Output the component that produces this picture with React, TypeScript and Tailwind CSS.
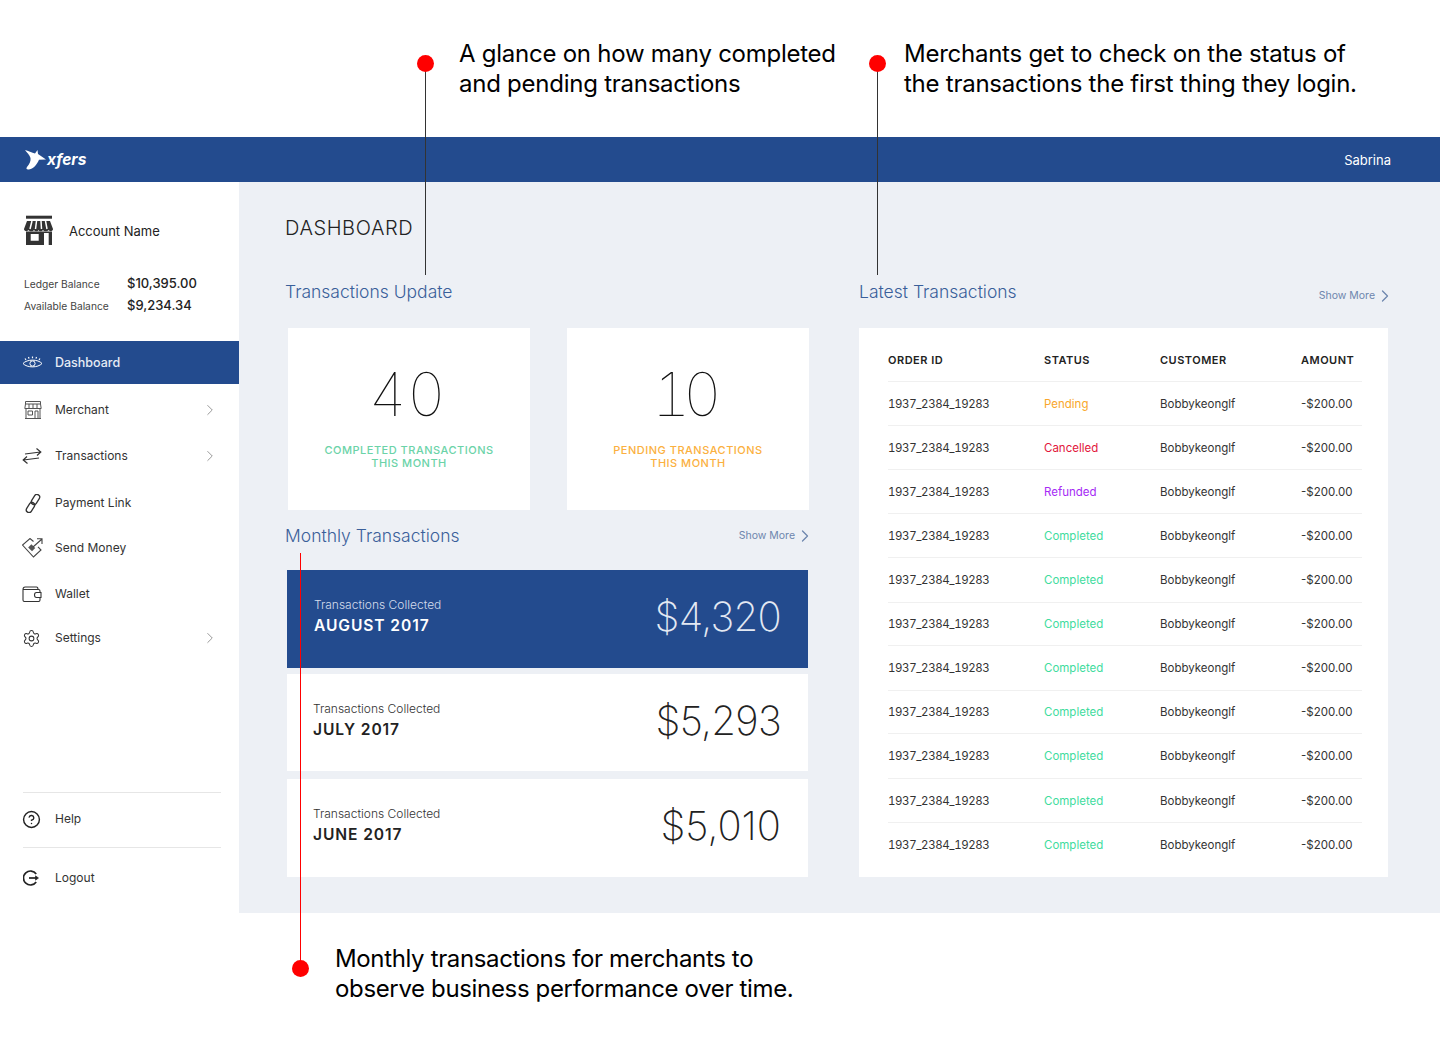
import { ChevronRight, Settings, CircleHelp } from 'lucide-react';

const GREEN = 'text-[#3fdc9e]';

const rows = [
  { status: 'Pending', color: 'text-[#f9a72b]', h: 'h-[44px]' },
  { status: 'Cancelled', color: 'text-[#e2163c]', h: 'h-[44px]' },
  { status: 'Refunded', color: 'text-[#a62bf5]', h: 'h-[44px]' },
  { status: 'Completed', color: GREEN, h: 'h-[44px]' },
  { status: 'Completed', color: GREEN, h: 'h-[45px]' },
  { status: 'Completed', color: GREEN, h: 'h-[43px]' },
  { status: 'Completed', color: GREEN, h: 'h-[45px]' },
  { status: 'Completed', color: GREEN, h: 'h-[43px]' },
  { status: 'Completed', color: GREEN, h: 'h-[45px]' },
  { status: 'Completed', color: GREEN, h: 'h-[44px]' },
  { status: 'Completed', color: GREEN, h: 'h-[44px]' },
];

const months = [
  { month: 'AUGUST 2017', amount: '$4,320', active: true, h: 'h-[98px]', tracking: 'tracking-[-0.7px]' },
  { month: 'JULY 2017', amount: '$5,293', active: false, h: 'h-[97px] pt-[1px]', tracking: 'tracking-[-0.7px]' },
  { month: 'JUNE 2017', amount: '$5,010', active: false, h: 'h-[98px] mt-[2px]', tracking: 'tracking-[0px]' },
];

function Logo() {
  return (
    <svg width="22" height="22" viewBox="0 0 22 22" className="shrink-0">
      <path d="M0 1 C3 2 7 3.5 10 4.5 L12.5 1 L13 5 L21 10.5 L14 10.8 C12 15.5 9 19.5 4 20.5 C1.5 21 .8 19.5 2 18 C4.5 15 6 12 5.5 9 C4.5 6 2 3.5 0 1 Z" fill="#fff" />
    </svg>
  );
}

function StoreSolid() {
  return (
    <svg width="30" height="31" viewBox="0 0 30 31" fill="#333">
      <rect x="2" y="0.7" width="26" height="3" />
      <path d="M3 6 H26 L29 14 C29 16.5 25.5 16.8 24.5 15 C23.5 16.8 20 16.8 19 15 C18 16.8 15 16.8 14.5 15 C14 16.8 11 16.8 10 15 C9 16.8 5.5 16.8 4.5 15 C3.5 16.8 0 16.5 0 14 Z" />
      <path d="M8 6 L6 14 M12.5 6 L11.5 14 M17 6 L17.5 14 M21.5 6 L23 14" stroke="#fff" strokeWidth="1.5" />
      <path fillRule="evenodd" d="M2 16.5 H28 V30 H2 Z M6.7 19 V25.7 H14.7 V19 Z M20 18 V30 H24.7 V18 Z" />
    </svg>
  );
}

function MerchantIcon() {
  return (
    <svg width="18" height="18" viewBox="0 0 18 18" fill="none" stroke="#555" strokeWidth="1">
      <path d="M1.5 .5 H16.5 V3 H1.5 Z M1.5 3 L.8 7.5 H17.2 L16.5 3 M5 3 V7.5 M9 3 V7.5 M13 3 V7.5 M2 7.5 V17.5 H16 V7.5 M4 10 H8.5 V14 H4 Z M11 17.5 V10 H14 V17.5 M1 17.5 H17" />
    </svg>
  );
}

function TransferIcon() {
  return (
    <svg width="20" height="16" viewBox="0 0 20 16" fill="none" stroke="#333" strokeWidth="1.2">
      <path d="M3 6 L18.5 4 M14.5 .5 L18.8 4 L15 7.5 M17 10 L1.5 12 M5 8.5 L1.2 12 L5.5 15.5" />
    </svg>
  );
}

function LinkIcon() {
  return (
    <svg width="16" height="19" viewBox="0 0 16 19" fill="none" stroke="#333" strokeWidth="1.3">
      <rect x="0" y="10.8" width="11" height="5.4" rx="2.7" transform="rotate(-58 5.5 13.5)" />
      <rect x="5" y="2.8" width="11" height="5.4" rx="2.7" transform="rotate(-58 10.5 5.5)" />
    </svg>
  );
}

function SendMoneyIcon() {
  return (
    <svg width="21" height="20" viewBox="0 0 21 20" fill="none" stroke="#444" strokeWidth="1.1">
      <path d="M11.5 3.5 L8 .5 L.5 7 L11.5 19 L19 12 L16 8.8" />
      <rect x="7" y="7.5" width="5.5" height="4.5" fill="#555" stroke="none" transform="rotate(45 9.7 9.7)" />
      <path d="M11 9 L20 1 M15 .8 H20 V6" />
    </svg>
  );
}

function WalletIcon() {
  return (
    <svg width="20" height="16" viewBox="0 0 20 16" fill="none" stroke="#333" strokeWidth="1.1">
      <path d="M1 3.5 H16.5 C17.5 3.5 18 4 18 5 V6.5 M18 11.5 V14 C18 14.8 17.5 15.5 16.5 15.5 H2.5 C1.5 15.5 1 14.8 1 14 V3.5 C1 2 2 1 3.2 1 H14.5 C15.5 1 16 1.6 16 3.5" />
      <path d="M19 6.5 H14.5 C13 6.5 12.5 7.5 12.5 9 C12.5 10.5 13 11.5 14.5 11.5 H19 Z" />
    </svg>
  );
}

function EyeIcon() {
  return (
    <svg width="21" height="13" viewBox="0 0 21 13" fill="none" stroke="#fff" strokeWidth="1">
      <path d="M1 7.5 C5 3 16 3 20 7.5 C16 12 5 12 1 7.5 Z" />
      <circle cx="10.5" cy="7.5" r="2.6" />
      <path d="M10.5 .5 V2.2 M6.5 1 L7 2.6 M14.5 1 L14 2.6 M3 2.5 L4 3.8 M18 2.5 L17 3.8" strokeWidth="1.2" />
    </svg>
  );
}

function LogoutIcon() {
  return (
    <svg width="17" height="16" viewBox="0 0 17 16" fill="none" stroke="#222" strokeWidth="1.7">
      <path d="M13.2 4 A7 7 0 1 0 13.2 12" />
      <path d="M6 8 H14" />
      <path d="M12.5 5.8 L15.5 8 L12.5 10.2 Z" fill="#222" strokeWidth="0.6" />
    </svg>
  );
}

const navItems = [
  { label: 'Merchant', icon: <MerchantIcon />, chevron: true, h: 'h-[46px]', indent: 'pl-[24px]' },
  { label: 'Transactions', icon: <TransferIcon />, chevron: true, h: 'h-[46px]', indent: 'pl-[22px]' },
  { label: 'Payment Link', icon: <LinkIcon />, chevron: false, h: 'h-[46px] pt-[2px]', indent: 'pl-[25px]' },
  { label: 'Send Money', icon: <SendMoneyIcon />, chevron: false, h: 'h-[46px]', indent: 'pl-[22px]' },
  { label: 'Wallet', icon: <WalletIcon />, chevron: false, h: 'h-[46px]', indent: 'pl-[22px]' },
  { label: 'Settings', icon: <Settings size={19} strokeWidth={1.3} color="#333" />, chevron: true, h: 'h-[42px]', indent: 'pl-[22px]' },
];

function SectionTitle({ title }: { title: string }) {
  return <h2 className="text-[17.5px] leading-[24px] font-light text-[#3a5f9a]">{title}</h2>;
}

function ShowMore() {
  return (
    <div className="flex items-center -mr-[7px] text-[10.5px] text-[#6d86ad]">
      <span>Show More</span>
      <ChevronRight size={20} strokeWidth={1.5} />
    </div>
  );
}

function StatCard({ value, color }: { value: string; color: string }) {
  return (
    <div className="w-[242px] h-[182px] bg-white flex flex-col items-center pt-[31px]">
      <div className={`text-[60px] leading-[70px] font-thin tabular-nums text-[#111] ${value === '40' ? 'pr-[4px]' : 'pr-[10px] tracking-[-8px]'}`}>{value}</div>
      <div className={`mt-[15px] text-center text-[11px] leading-[13px] font-medium tracking-[0.5px] ${color}`}>
        {value === '40' ? 'COMPLETED TRANSACTIONS' : 'PENDING TRANSACTIONS'}
        <br />
        THIS MONTH
      </div>
    </div>
  );
}

export default function App() {
  return (
    <div className="relative w-[1440px] h-[1044px] overflow-hidden bg-white font-['Inter',sans-serif] text-[#222]">
      {/* Top notes */}
      <div className="h-[137px] pt-[39px] pl-[459px] flex text-[24px] leading-[30px] tracking-[-0.25px] text-black">
        <p className="w-[445px]">A glance on how many completed<br />and pending transactions</p>
        <p>Merchants get to check on the status of<br />the transactions the first thing they login.</p>
      </div>

      {/* Header */}
      <header className="h-[45px] bg-[#234b8e] flex items-center justify-between pl-[25px] pr-[49px] pt-[1px] text-white">
        <div className="flex items-center">
          <Logo />
          <span className="text-[15.5px] font-bold italic">xfers</span>
        </div>
        <span className="text-[13px] pt-[1px]">Sabrina</span>
      </header>

      <div className="h-[731px] flex">
        {/* Sidebar */}
        <aside className="w-[239px] bg-white flex flex-col">
          <div className="flex items-center pl-[24px] pt-[33px] gap-[15px]">
            <StoreSolid />
            <span className="text-[13px] tracking-[-0.02px] pt-[2px]">Account Name</span>
          </div>
          <div className="grid grid-cols-[103px_1fr] pl-[24px] pt-[30px] gap-y-[6px] items-center">
            <span className="text-[10.25px] leading-[16px] text-[#444]">Ledger Balance</span>
            <span className="text-[13px] leading-[16px] font-medium -mt-[2px]">$10,395.00</span>
            <span className="text-[10.25px] leading-[16px] text-[#444]">Available Balance</span>
            <span className="text-[13px] leading-[16px] font-medium -mt-[2px]">$9,234.34</span>
          </div>
          <div className="mt-[27px] h-[43px] bg-[#234b8e] flex items-center pl-[22px] text-white">
            <div className="w-[33px]"><EyeIcon /></div>
            <span className="text-[12.5px] font-medium text-[#e6ebf5] pt-[2px]">Dashboard</span>
          </div>
          <nav className="mt-[3px]">
            {navItems.map((item) => (
              <div key={item.label} className={`${item.h} flex items-center pr-[20px] text-[12px] text-[#333]`}>
                <div className={`w-[55px] ${item.indent}`}>{item.icon}</div>
                <span>{item.label}</span>
                {item.chevron && (
                  <ChevronRight size={18} strokeWidth={1} color="#777" className="ml-auto" />
                )}
              </div>
            ))}
          </nav>
          <div className="mt-[133px] ml-[23px] mr-[18px] border-t border-[#e6e6e6] h-[55px] pb-[2px] flex items-center text-[12px] text-[#333]">
            <div className="w-[32px] -ml-[1px]"><CircleHelp size={19} strokeWidth={1.8} color="#222" /></div>
            <span className="ml-[1px]">Help</span>
          </div>
          <div className="ml-[23px] mr-[18px] border-t border-[#e6e6e6] h-[60px] pt-[1px] flex items-center text-[12px] text-[#333]">
            <div className="w-[32px]"><LogoutIcon /></div>
            <span>Logout</span>
          </div>
        </aside>

        {/* Main */}
        <main className="flex-1 bg-[#edf0f5] pl-[46px] flex">
          <div className="w-[574px]">
            <h1 className="pt-[33px] text-[20px] leading-[26px] font-light tracking-[0.6px] text-[#222]">DASHBOARD</h1>
            <div className="mt-[39px]">
              <SectionTitle title="Transactions Update" />
            </div>
            <div className="mt-[24px] ml-[3px] flex gap-[37px]">
              <StatCard value="40" color="text-[#6bd3a8]" />
              <StatCard value="10" color="text-[#fbb040]" />
            </div>
            <div className="mt-[14px] w-[523px] flex items-start justify-between">
              <SectionTitle title="Monthly Transactions" />
              <div className="pt-[2px]">
                <ShowMore />
              </div>
            </div>
            <div className="mt-[22px] ml-[2px] w-[521px] flex flex-col gap-[6px]">
              {months.map((m) => (
                <div
                  key={m.month}
                  className={`${m.h} flex items-center justify-between pr-[27px] ${m.active ? 'pl-[27px] bg-[#234b8e] text-white' : 'pl-[26px] bg-white text-[#222]'}`}
                >
                  <div className="pb-[6px]">
                    <div className={`text-[12px] leading-[16px] font-light ${m.active ? 'text-[#d3dcec]' : 'text-[#333]'}`}>Transactions Collected</div>
                    <div className="mt-[3px] text-[15.6px] leading-[20px] font-semibold tracking-[0.9px]">{m.month}</div>
                  </div>
                  <div className={`pb-[4px] text-[40px] leading-[50px] font-extralight ${m.tracking} ${m.active ? 'text-[#e3e9f3]' : 'text-[#222]'}`}>{m.amount}</div>
                </div>
              ))}
            </div>
          </div>

          <div className="w-[529px]">
            <div className="pt-[98px] flex items-start justify-between">
              <SectionTitle title="Latest Transactions" />
              <div className="pt-[6px]">
                <ShowMore />
              </div>
            </div>
            <div className="mt-[22px] h-[549px] bg-white pl-[29px] pr-[26px]">
              <div className="h-[54px] grid grid-cols-[156px_116px_141px_1fr] items-center text-[11px] font-semibold tracking-[0.5px] text-[#222] border-b border-[#f0f0f0] pt-[12px]">
                <span>ORDER ID</span>
                <span>STATUS</span>
                <span>CUSTOMER</span>
                <span>AMOUNT</span>
              </div>
              {rows.map((row, i) => (
                <div key={i} className={`${row.h} pt-[2px] grid grid-cols-[156px_116px_141px_1fr] items-center text-[11.5px] text-[#333] ${i < rows.length - 1 ? 'border-b border-[#f0f0f0]' : ''}`}>
                  <span className="tabular-nums tracking-[-0.4px]">1937_2384_19283</span>
                  <span className={row.color}>{row.status}</span>
                  <span>Bobbykeonglf</span>
                  <span>-$200.00</span>
                </div>
              ))}
            </div>
          </div>
        </main>
      </div>

      {/* Bottom note */}
      <div className="pl-[335px] pt-[31px] text-[24px] leading-[30px] tracking-[-0.35px] text-black">
        <p>Monthly transactions for merchants to<br />observe business performance over time.</p>
      </div>

      {/* Callout dots and lines */}
      <div className="absolute left-[425px] top-[63px] w-px h-[212px] bg-[#333]" />
      <div className="absolute left-[417px] top-[55px] w-[17px] h-[17px] rounded-full bg-[#ff0000]" />
      <div className="absolute left-[877px] top-[63px] w-px h-[212px] bg-[#333]" />
      <div className="absolute left-[869px] top-[55px] w-[17px] h-[17px] rounded-full bg-[#ff0000]" />
      <div className="absolute left-[300px] top-[553px] w-px h-[415px] bg-[#ff0000]" />
      <div className="absolute left-[292px] top-[960px] w-[17px] h-[17px] rounded-full bg-[#ff0000]" />
    </div>
  );
}
